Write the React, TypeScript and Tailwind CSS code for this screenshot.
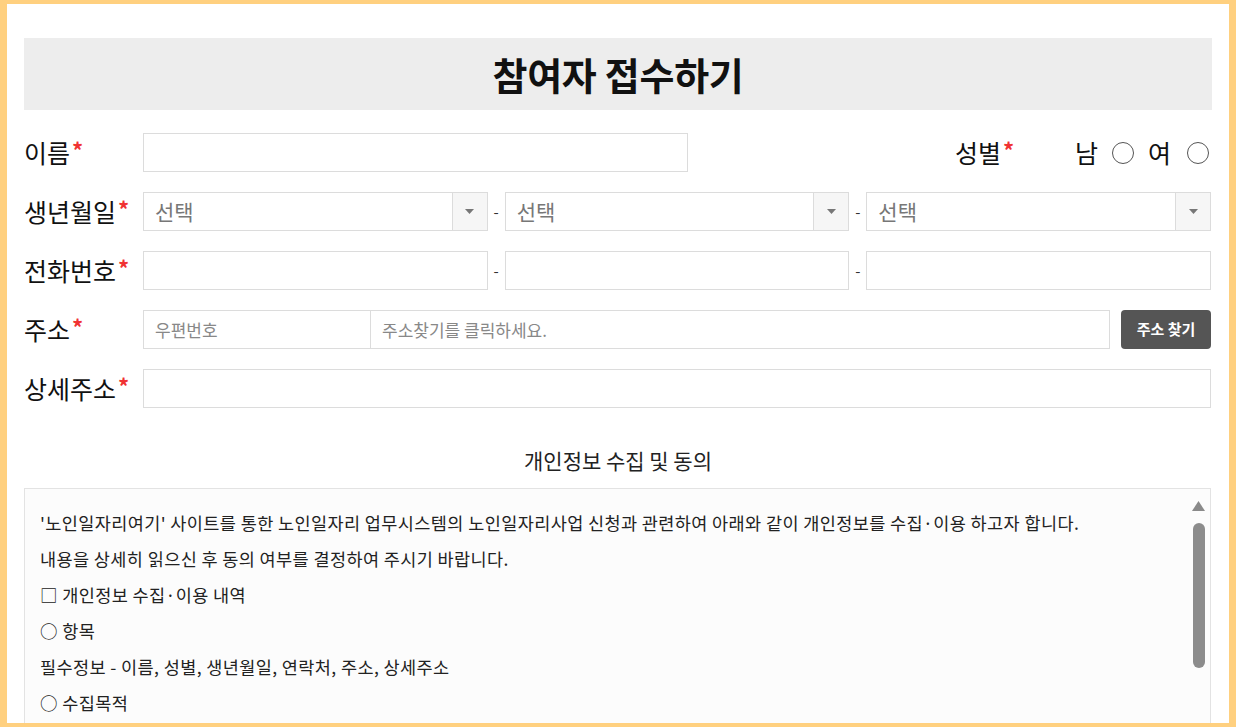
import React from "react";

const font = { fontFamily: '"Malgun Gothic", "Noto Sans CJK KR", "Noto Sans", sans-serif' };

function Star() {
  return <span className="text-[#f03232] text-[22px] font-bold ml-[2px] -mt-[7px] leading-none">*</span>;
}

function Label({ text }: { text: string }) {
  return (
    <div className="w-[119px] shrink-0 text-[25px] leading-none text-[#111] flex items-center">
      {text}
      <Star />
    </div>
  );
}

function Select() {
  return (
    <div className="flex-1 h-[39px] flex border border-[#dcdcdc] bg-white">
      <div className="flex-1 flex items-center pl-[11px] text-[21px] text-[#777] leading-none">선택</div>
      <div className="w-[35px] flex items-center justify-center bg-[#f6f6f6] border-l border-[#dcdcdc]">
        <svg width="9" height="5" viewBox="0 0 9 5"><path d="M0 0h9L4.5 5z" fill="#777" /></svg>
      </div>
    </div>
  );
}

function Dash() {
  return <div className="w-[17px] shrink-0 text-center text-[15px] text-[#333] leading-none">-</div>;
}

export default function App() {
  return (
    <div
      className="h-[727px] overflow-hidden bg-white border-t-[4px] border-b-[4px] border-l-[7px] border-r-[7px] border-[#ffd07f]"
      style={font}
    >
      <div className="pl-[17px] pr-[17px] pt-[34px]">
        <div className="h-[72px] bg-[#ededed] flex items-center justify-center">
          <h1 className="text-[38px] font-bold text-[#111] leading-none tracking-[-0.3px]">참여자 접수하기</h1>
        </div>

        <div className="mt-[23px] flex flex-col gap-[20px] pr-[1px]">
          <div className="flex items-center h-[39px]">
            <Label text="이름" />
            <div className="w-[545px] h-[39px] border border-[#dcdcdc]" />
            <div className="flex-1" />
            <div className="flex items-center w-[120px] text-[25px] leading-none text-[#111]">
              성별<Star />
            </div>
            <div className="flex items-center text-[25px] leading-none text-[#111] pr-[2px]">
              <span>남</span>
              <span className="ml-[14px] w-[22px] h-[22px] rounded-full border border-[#555]" />
              <span className="ml-[14px]">여</span>
              <span className="ml-[16px] w-[22px] h-[22px] rounded-full border border-[#555]" />
            </div>
          </div>

          <div className="flex items-center">
            <Label text="생년월일" />
            <Select />
            <Dash />
            <Select />
            <Dash />
            <Select />
          </div>

          <div className="flex items-center">
            <Label text="전화번호" />
            <div className="flex-1 h-[39px] border border-[#dcdcdc]" />
            <Dash />
            <div className="flex-1 h-[39px] border border-[#dcdcdc]" />
            <Dash />
            <div className="flex-1 h-[39px] border border-[#dcdcdc]" />
          </div>

          <div className="flex items-center">
            <Label text="주소" />
            <div className="w-[228px] h-[39px] border border-[#dcdcdc] flex items-center pl-[11px] text-[17px] text-[#888]">우편번호</div>
            <div className="flex-1 h-[39px] border border-l-0 border-[#dcdcdc] flex items-center pl-[11px] text-[17px] text-[#888]">주소찾기를 클릭하세요.</div>
            <button className="ml-[11px] w-[90px] h-[39px] rounded-[4px] bg-[#555] text-white text-[15px] font-bold">주소 찾기</button>
          </div>

          <div className="flex items-center">
            <Label text="상세주소" />
            <div className="flex-1 h-[39px] border border-[#dcdcdc]" />
          </div>
        </div>

        <div className="mt-[42px] text-center text-[21px] text-[#222] leading-none">개인정보 수집 및 동의</div>

        <div className="relative mt-[17px] mr-[1px] h-[300px] bg-[#fcfcfc] border border-[#e3e3e3] pl-[15px] pt-[16px] text-[17.5px] tracking-[0.4px] text-[#222] leading-[36px]">
          <p>'노인일자리여기' 사이트를 통한 노인일자리 업무시스템의 노인일자리사업 신청과 관련하여 아래와 같이 개인정보를 수집·이용 하고자 합니다.</p>
          <p>내용을 상세히 읽으신 후 동의 여부를 결정하여 주시기 바랍니다.</p>
          <p>□ 개인정보 수집·이용 내역</p>
          <p>○ 항목</p>
          <p>필수정보 - 이름, 성별, 생년월일, 연락처, 주소, 상세주소</p>
          <p>○ 수집목적</p>
          <div className="absolute right-[5px] top-[12px] flex flex-col items-center w-[13px]">
            <svg width="13" height="10" viewBox="0 0 13 10"><path d="M6.5 0L13 10H0z" fill="#8a8a8a" /></svg>
            <div className="mt-[12px] w-[12px] h-[145px] rounded-full bg-[#8c8c8c]" />
          </div>
        </div>
      </div>
    </div>
  );
}
